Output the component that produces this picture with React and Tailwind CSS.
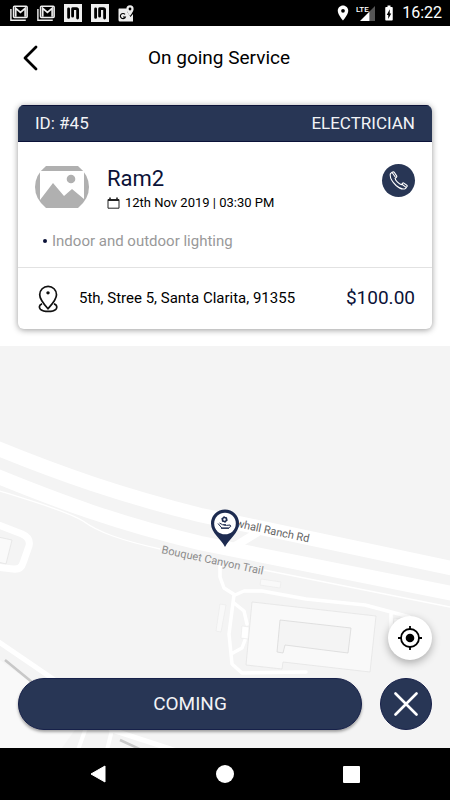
// App.jsx
import { MdLocationOn, MdBatteryChargingFull } from "react-icons/md";

function MailIcon() {
    return (
        <svg width="18" height="17" viewBox="0 0 20 18" fill="none">
            <path d="M1 4v12.6h16.5" stroke="#eee" strokeWidth="1.6" />
            <rect x="4" y="1" width="15" height="12.4" rx="1" stroke="#eee" strokeWidth="1.8" />
            <path d="M6.4 12.5V3.2l5.2 4.6 5.2-4.6v9.3" stroke="#eee" strokeWidth="1.8" />
        </svg>
    );
}

function AppBadgeIcon() {
    return (
        <svg width="18" height="18" viewBox="0 0 18 18">
            <rect width="18" height="18" fill="#eee" />
            <path d="M4.6 4.8v8.6M8.6 12.2V4.8M8.8 4.6h3.600q1.200 0 1.200 1.200v8.200" stroke="#000" strokeWidth="2.8" strokeLinecap="round" fill="none" />
        </svg>
    );
}

function MapsStatusIcon() {
    return (
        <svg width="16" height="17" viewBox="0 0 16 17">
            <path d="M1 3.5h8v3l3.5 5.5L15 9v7.5H2q-1.5 0-1.5-1.5V4z" fill="#eee" />
            <path d="M7 9.4A2.6 2.6 0 1 0 7.4 12H5" stroke="#000" strokeWidth="1.1" fill="none" />
            <path d="M12 .3a3.6 3.6 0 0 0-3.6 3.6c0 2.5 3.6 7 3.6 7s3.6-4.5 3.6-7A3.6 3.6 0 0 0 12 .3z" fill="#eee" />
            <circle cx="12" cy="4" r="1.4" fill="#000" />
        </svg>
    );
}

function SignalIcon() {
    return (
        <svg width="20" height="17" viewBox="0 0 20 17">
            <path d="M19 1v15h-5.5V6.5z" fill="#555" />
            <path d="M4 16l9.5-9.5V16z" fill="#fff" />
            <text x="0" y="7" fontSize="8" fontWeight="500" fill="#fff">LTE</text>
        </svg>
    );
}

function StatusBar() {
    return (
        <div className="flex h-[26px] shrink-0 items-center justify-between bg-black pr-2 pl-[10px] text-white">
            <div className="flex items-center gap-[9px]">
                <MailIcon />
                <MailIcon />
                <AppBadgeIcon />
                <AppBadgeIcon />
                <MapsStatusIcon />
            </div>
            <div className="flex items-center">
                <MdLocationOn size={18} />
                <span className="ml-1"><SignalIcon /></span>
                <MdBatteryChargingFull size={18} className="ml-1" />
                <span className="ml-1 text-base leading-none">16:22</span>
            </div>
        </div>
    );
}

function ServiceCard() {
    return (
        <section className="mx-[18px] overflow-hidden rounded-md bg-white shadow-[0_1px_6px_rgba(0,0,0,0.4)]">
            <div className="flex h-[37px] items-center justify-between border-y border-[#0b1238] bg-[#283655] px-[17px] text-[17px] text-[#f2f3f6]">
                <span>ID: #45</span>
                <span>ELECTRICIAN</span>
            </div>
            <div className="flex items-start px-[17px] pt-[22px]">
                <svg width="54" height="42" viewBox="0 0 54 42" className="mt-[2px] shrink-0">
                    <path d="M11 0h32q11 9 11 21t-11 21H11Q0 33 0 21T11 0z" fill="#b0b0b0" />
                    <path d="M5 5h44v28L37 23l-8 7-11-13L5 34z" fill="#fff" />
                    <circle cx="36" cy="13" r="4.3" fill="#b0b0b0" />
                </svg>
                <div className="ml-[18px] flex-1">
                    <h2 className="text-[22px] leading-[30px] text-[#0b1238]">Ram2</h2>
                    <p className="flex items-center text-[13px] leading-[18px] text-black">
                        <svg width="13" height="12" viewBox="0 0 13 12" fill="none" className="mr-[5px]">
                            <path d="M1 2.5h11v8.7H1z" stroke="#222" strokeWidth="1" />
                            <path d="M1 3.2h11M3 .5v2.8M10 .5v2.8" stroke="#222" strokeWidth="1.6" />
                        </svg>
                        12th Nov 2019 | 03:30 PM
                    </p>
                </div>
                <button aria-label="Call" className="flex size-[33px] items-center justify-center rounded-full bg-[#283655]">
                    <svg width="19" height="19" viewBox="0 0 19 19" fill="none" stroke="#fff" strokeWidth="1.1" strokeLinejoin="round">
                        <path d="M3.2 1.2 1.4 2.6C.4 6.8 3.7 11.2 7.1 14.5c3.3 3 6.6 4.3 9.5 2.9l1.4-1.9q.5-.7-.2-1.3l-2.9-2.1q-.8-.5-1.4.2l-1.1 1.4q-1.8-.4-3.9-2.5T6.1 7.400l1.300-1.100q.7-.6.2-1.400L5.400 1.500q-.7-1-2.200-.3z" />
                        <path d="m3.100 1.500 3.500 5M12.900 13.300l4.200 3.100" />
                    </svg>
                </button>
            </div>
            <p className="flex items-center pt-[17px] pb-[14px] pl-[25px] text-[15px] leading-6 text-[#999]">
                <span className="mr-[5px] size-1 rounded-full bg-[#0b1238]" />
                Indoor and outdoor lighting
            </p>
            <div className="flex h-[62px] items-center border-t border-[#e2e2e2] px-[17px]">
                <svg width="26" height="28" viewBox="0 0 24 26" fill="none" stroke="#111" strokeWidth="1.6" className="shrink-0">
                    <path d="M12 22C8 17.500 4.300 13.500 4.300 9a7.800 7.800 0 0 1 15.600 0c0 4.500-3.900 8.500-7.900 13z" />
                    <path d="M6.500 17.600c-3 .8-3 3.600-1.500 5 3 2.600 11.500 2.600 14.300 0 1.500-1.600 1.200-4.300-1.800-5" />
                    <circle cx="12" cy="7.300" r="1.600" fill="#111" stroke="none" />
                </svg>
                <span className="ml-[18px] flex-1 text-[15px] text-black">5th, Stree 5, Santa Clarita, 91355</span>
                <span className="text-[19px] text-[#0b1238]">$100.00</span>
            </div>
        </section>
    );
}

function MapCanvas() {
    return (
        <svg className="absolute inset-0 size-full" viewBox="0 346 450 402" preserveAspectRatio="xMidYMid slice" fill="none">
            <path d="M0 346h450v402H0z" fill="#f4f4f4" />

            {/* parking lot, bottom left */}
            <path d="M0 660 82 720 62 748H0z" fill="#f9f9f9" />
            <path d="M-4 640 56 681 112 730 180 752" stroke="#fff" strokeWidth="5" />
            <path d="M88 722 78 750M114 722 107 750" stroke="#fff" strokeWidth="4" />
            <path d="M5 660 38 687M120 740l26 12" stroke="#c8c8c8" strokeWidth="2.500" />

            {/* buildings */}
            <path d="M-2 537l14 3-6 24-8-2z" fill="#fafafa" stroke="#dedede" strokeWidth=".6" />
            <path d="M252 602 376 616 370 672 283 662 282 669 246 665z" fill="#f9f9f9" stroke="#e3e3e3" strokeWidth=".7" />
            <path d="M280 620 351 628 348 653 285 645 283 653 277 652z" fill="#f4f4f4" stroke="#d6d6d6" strokeWidth=".7" />
            <path d="m261 579 20 3-1 6-20-3zM220 604l6 1-5 27-5-1zM394 618l12 2-2 12-11-2z" fill="#f9f9f9" stroke="#e9e9e9" strokeWidth=".6" />

            {/* paths */}
            <path d="M-4 524 22 534Q31 538 29 546L23 563Q21 570 13 569L-4 567" stroke="#fff" strokeWidth="7" />
            <path d="M0 491C35 502 68 512 83 521C98 532 120 540 160 549M264 570 450 607" stroke="#fff" strokeWidth="1.300" />
            <path d="M220 565V577L224 588 235 595 244 591H262L306 599 365 605 410 617M391 613V630L402 648" stroke="#fff" strokeWidth="3.500" strokeLinejoin="round" />
            <path d="M234 595 229 634 232 664 242 673 306 672M234 603 244 611 247 624M245 640 242 648 231 654" stroke="#fff" strokeWidth="3.500" strokeLinejoin="round" strokeLinecap="round" />
            <path d="m242 626 7 1-1 12-7-1z" fill="#fff" stroke="#e6e6e6" strokeWidth=".5" />

            {/* main roads */}
            <path d="M-6 447C60 474 120 495 200 515L455 569" stroke="#fff" strokeWidth="14.500" />
            <path d="M-6 475C60 502 120 524 200 543L455 594" stroke="#fff" strokeWidth="14.500" />
            <path d="M232 548 258 532" stroke="#fff" strokeWidth="8" />

            <g fontSize="11">
                <text x="222" y="524" transform="rotate(12 222 524)" className="fill-[#666]">Newhall Ranch Rd</text>
                <text x="161" y="553" transform="rotate(12 161 553)" className="fill-[#8c8c8c]">Bouquet Canyon Trail</text>
            </g>

            {/* provider pin */}
            <path d="M225 547C221 539 211 533 211 523.500a14 14 0 0 1 28 0C239 533 229 539 225 547z" fill="#1d2b50" />
            <circle cx="225" cy="523.500" r="10.800" fill="#fff" />
            <circle cx="224.500" cy="519.500" r="2" stroke="#1d2b50" strokeWidth="1.500" />
            <circle cx="224.500" cy="519.500" r="2.900" stroke="#1d2b50" strokeWidth=".8" strokeDasharray="1.500 1.500" />
            <path d="M218 523.500l3.800 4.500h6.700l2.200-1.500-.6-1.500-3.600.4-3-.4M219.500 523l3 1.700h3.500M221 528.300h8" stroke="#1d2b50" strokeWidth="1" strokeLinejoin="round" />
        </svg>
    );
}

function SystemNav() {
    return (
        <nav className="flex h-[52px] shrink-0 items-center justify-between bg-black px-[90px]">
            <button aria-label="Back">
                <svg width="16" height="18" viewBox="0 0 16 18"><path d="M1 9 15 1v16z" fill="#fff" stroke="#fff" strokeLinejoin="round" /></svg>
            </button>
            <button aria-label="Home" className="size-[18px] rounded-full bg-white" />
            <button aria-label="Recent apps" className="size-[17px] rounded-[1px] bg-white" />
        </nav>
    );
}

export default function App() {
    return (
        <div className="flex min-h-screen flex-col bg-white font-[Roboto,sans-serif]">
            <StatusBar />
            <header className="grid h-16 shrink-0 grid-cols-[1fr_auto_1fr] items-center pr-[34px] pl-[22px]">
                <button aria-label="Go back" className="w-4">
                    <svg width="17" height="26" viewBox="0 0 17 26" fill="none">
                        <path d="M14 2 3 13l11 11" stroke="#000" strokeWidth="2.800" strokeLinecap="round" strokeLinejoin="round" />
                    </svg>
                </button>
                <h1 className="text-[19px] text-black">On going Service</h1>
            </header>
            <div className="pt-[15px] pb-[17px]">
                <ServiceCard />
            </div>
            <main className="relative flex flex-1 flex-col justify-end">
                <MapCanvas />
                <div className="relative flex flex-col gap-[18px] px-[18px] pb-[18px]">
                    <button aria-label="My location" className="flex size-11 items-center justify-center self-end rounded-full bg-white shadow-[0_3px_8px_rgba(0,0,0,0.3)]">
                        <svg width="24" height="24" viewBox="0 0 24 24" fill="none" stroke="#000" strokeWidth="1.800">
                            <circle cx="12" cy="12" r="9" />
                            <circle cx="12" cy="12" r="4.300" fill="#000" stroke="none" />
                            <path d="M12 0v4M12 20v4M0 12h4M20 12h4" />
                        </svg>
                    </button>
                    <div className="flex gap-[18px]">
                        <button className="h-[52px] flex-1 rounded-full border border-[#17214a] bg-[#283655] text-[19px] text-[#f2f3f6] shadow-[0_2px_3px_rgba(0,0,0,0.35)]">COMING</button>
                        <button aria-label="Cancel" className="flex size-[52px] items-center justify-center rounded-full border border-[#17214a] bg-[#283655]">
                            <svg width="24" height="24" viewBox="0 0 24 24"><path d="M1.500 1.500 22.500 22.500M22.500 1.500 1.500 22.500" stroke="#fff" strokeWidth="2.600" strokeLinecap="round" /></svg>
                        </button>
                    </div>
                </div>
            </main>
            <SystemNav />
        </div>
    );
}
